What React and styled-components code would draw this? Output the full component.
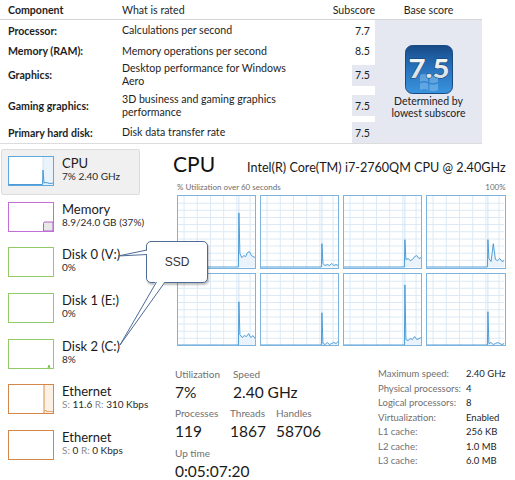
import React from 'react';
import styled, { createGlobalStyle } from 'styled-components';

const GlobalStyle = createGlobalStyle`
  html, body {
    margin: 0;
    padding: 0;
    background: #fff;
  }
  body {
    font-family: Lato, "Liberation Sans", sans-serif;
    color: #1e1e1e;
  }
`;

const Page = styled.div`
  position: relative;
  width: 515px;
  height: 480px;
  overflow: hidden;
  background: #fff;
`;

/* ---------- experience index table ---------- */

const ScoreTable = styled.div`
  display: grid;
  grid-template-columns: 122px 230px 23px 107px;
  grid-template-rows: 20px 21px 20px 28px 33px 21px;
  width: 482px;
  border-bottom: 1px solid #dcdcdc;
  font-size: 10.6px;
`;

const HeadCell = styled.div`
  display: flex;
  align-items: center;
  justify-content: ${p => p.$align || 'flex-start'};
  padding-left: ${p => p.$pad || 0}px;
  font-weight: ${p => (p.$bold ? 700 : 400)};
  white-space: nowrap;
  border-bottom: 1px solid #d4d4d4;
  box-sizing: border-box;
`;

const NameCell = styled.div`
  display: flex;
  align-items: center;
  padding-left: 8px;
  font-weight: 700;
`;

const DescCell = styled.div`
  display: flex;
  align-items: center;
  line-height: 13px;
`;

const SubCell = styled.div`
  display: flex;
  align-items: center;
`;

const SubBox = styled.div`
  width: 100%;
  height: 21px;
  display: flex;
  align-items: center;
  padding-left: 3px;
  box-sizing: border-box;
  background: ${p => (p.$shaded ? '#e6e8f1' : '#fff')};
`;

const BaseCell = styled.div`
  grid-column: 4;
  grid-row: 2 / span 5;
  background: #e6e8f1;
  display: flex;
  flex-direction: column;
  align-items: center;
  justify-content: center;
  gap: 2px;
  padding-top: 1px;
`;

const BaseNote = styled.div`
  text-align: center;
  line-height: 11.5px;
  font-size: 10.5px;
  color: #222;
`;

/* ---------- task manager ---------- */

const Monitor = styled.div`
  display: flex;
  padding-top: 5px;
`;

const Sidebar = styled.div`
  width: 139px;
  padding-left: 1px;
  display: flex;
  flex-direction: column;
`;

const NavItem = styled.div`
  height: 45.67px;
  box-sizing: border-box;
  display: flex;
  align-items: flex-start;
  gap: 8px;
  padding: 6px 0 0 6px;
  background: ${p => (p.$active ? '#f0f0f0' : 'transparent')};
  border: 1px solid ${p => (p.$active ? '#dcdcdc' : 'transparent')};
  border-radius: 2px;
`;

const Thumb = styled.div`
  width: 46px;
  height: 30px;
  box-sizing: border-box;
  border: 1px solid ${p => p.$color};
  background: #fff;
  flex: none;

  svg {
    display: block;
    width: 44px;
    height: 28px;
  }
`;

const NavText = styled.div`
  display: flex;
  flex-direction: column;
  white-space: nowrap;
`;

const NavTitle = styled.div`
  font-size: 13px;
  line-height: 14px;
  color: #1a1a1a;
`;

const NavSub = styled.div`
  font-size: 10px;
  line-height: 12px;
  color: #2a2a2a;
`;

const Dim = styled.span`
  color: #8c8c8c;
`;

const Panel = styled.div`
  flex: 1;
  margin-left: 33px;
  padding-right: 12px;
  display: flex;
  flex-direction: column;
`;

const TitleRow = styled.div`
  display: flex;
  align-items: baseline;
  justify-content: space-between;
  margin-top: 3px;
`;

const Title = styled.div`
  font-size: 21px;
  line-height: 24px;
  color: #111;
`;

const CpuName = styled.div`
  font-size: 12.6px;
  color: #1a1a1a;
`;

const UtilRow = styled.div`
  display: flex;
  justify-content: space-between;
  padding-left: 4px;
  margin-top: 6px;
  font-size: 8px;
  line-height: 10px;
  color: #6e6e6e;
`;

const GraphGrid = styled.div`
  display: grid;
  grid-template-columns: repeat(4, 1fr);
  grid-template-rows: repeat(2, 1fr);
  gap: 4px;
  height: 151px;
  margin-top: 3px;
  padding-left: 4px;
`;

const CellFrame = styled.div`
  border: 1px solid #7db3dc;
  background: #fff;
  overflow: hidden;

  svg {
    display: block;
    width: 100%;
    height: 100%;
  }
`;

const Stats = styled.div`
  display: flex;
  margin-top: 22px;
  padding-left: 2px;
`;

const StatsLeft = styled.div`
  width: 203px;
  flex: none;
  display: flex;
  flex-direction: column;
`;

const StatRow = styled.div`
  display: flex;
  margin-top: ${p => p.$gap || 0}px;
`;

const Stat = styled.div`
  width: ${p => p.$w}px;
  display: flex;
  flex-direction: column;
  gap: 3px;
`;

const StatLabel = styled.div`
  font-size: 10px;
  line-height: 12px;
  color: #707070;
`;

const StatValue = styled.div`
  font-size: 15.5px;
  line-height: 18px;
  color: #1a1a1a;
  white-space: nowrap;
`;

const SpecTable = styled.div`
  display: grid;
  grid-template-columns: 88px auto;
  grid-auto-rows: 14.5px;
  align-items: center;
  margin-top: -1.5px;
  font-size: 9.5px;
  white-space: nowrap;
`;

const SpecLabel = styled.div`
  color: #707070;
`;

const SpecValue = styled.div`
  color: #1e1e1e;
`;

/* ---------- callout ---------- */

const Callout = styled.div`
  position: absolute;
  left: 146px;
  top: 241px;
  width: 62px;
  height: 42px;
  box-sizing: border-box;
  border: 1.5px solid #4d6b95;
  border-radius: 5px;
  background: #fff;
  box-shadow: 1px 2px 2px rgba(0, 0, 0, 0.25);
  display: flex;
  align-items: center;
  justify-content: center;
  font-family: "Liberation Sans", Arial, sans-serif;
  font-size: 12px;
  color: #333;
`;

const Pointers = styled.svg`
  position: absolute;
  left: 0;
  top: 0;
  width: 515px;
  height: 480px;
  pointer-events: none;
`;

/* ---------- drawings ---------- */

const ScoreBadge = () => (
  <svg width="48" height="49" viewBox="0 0 48 49">
    <defs>
      <linearGradient id="badgeBg" x1="0" y1="0" x2="0" y2="1">
        <stop offset="0" stopColor="#174a86" />
        <stop offset="0.45" stopColor="#2670bb" />
        <stop offset="1" stopColor="#3b94de" />
      </linearGradient>
      <linearGradient id="badgeText" x1="0" y1="0" x2="0" y2="1">
        <stop offset="0" stopColor="#ffffff" />
        <stop offset="1" stopColor="#cdd6e0" />
      </linearGradient>
    </defs>
    <rect x="0.5" y="0.5" width="47" height="48" rx="7" fill="url(#badgeBg)" stroke="#1a4b80" />
    <g fill="#8cc4f0" opacity="0.5">
      <path d="M15 30 Q19 28 23 30 L23 37 Q19 35 15 37 Z" />
      <path d="M24.5 30.5 Q29 32 33 30 L33 37 Q29 39 24.5 37.5 Z" />
      <path d="M15 38.5 Q19 36.5 23 38.5 L23 45 Q19 43 15 45 Z" />
      <path d="M24.5 39 Q29 40.5 33 38.5 L33 45 Q29 47 24.5 45.5 Z" />
    </g>
    <text
      x="24"
      y="33"
      textAnchor="middle"
      fontFamily="Lato, sans-serif"
      fontWeight="900"
      fontSize="26"
      textLength="41"
      lengthAdjust="spacingAndGlyphs"
      fill="url(#badgeText)"
      stroke="#15406e"
      strokeWidth="1"
      paintOrder="stroke"
    >
      7.5
    </text>
  </svg>
);

const thumbs = {
  cpu: (
    <svg viewBox="0 0 44 28">
      <rect x="34" y="0" width="10" height="28" fill="#eaf3fb" />
      <line x1="34" y1="0" x2="34" y2="28" stroke="#cfe3f3" />
      <polyline
        points="0,27.5 33.5,27.5 34,13 35,26 37,25.5 39,26 41,26.5 44,26"
        fill="none"
        stroke="#4a9bd5"
        strokeWidth="1"
      />
    </svg>
  ),
  mem: (
    <svg viewBox="0 0 44 28">
      <path d="M34.5 28 L34.5 20.5 Q34.5 19 36 19 L44 19 L44 28 Z" fill="#e8e8e8" stroke="#b45fc9" strokeWidth="1" />
    </svg>
  ),
  empty: <svg viewBox="0 0 44 28" />,
  disk2: (
    <svg viewBox="0 0 44 28">
      <polyline points="39,28 40,25 41,28" fill="#cfe8bd" stroke="#7cbf4f" strokeWidth="1" />
    </svg>
  ),
  eth: (
    <svg viewBox="0 0 44 28">
      <rect x="35" y="0" width="9" height="28" fill="#fdf1e5" />
      <line x1="35" y1="0" x2="35" y2="28" stroke="#d8904f" strokeWidth="1" />
      <polyline points="35,27 37,25 38,27 40,26 41,27 42,26 44,27" fill="none" stroke="#d8904f" strokeWidth="0.8" />
    </svg>
  ),
};

const navItems = [
  { title: 'CPU', sub: '7% 2.40 GHz', color: '#5ea8dd', thumb: 'cpu', active: true },
  { title: 'Memory', sub: '8.9/24.0 GB (37%)', color: '#c16fd6', thumb: 'mem' },
  { title: 'Disk 0 (V:)', sub: '0%', color: '#92c96a', thumb: 'empty' },
  { title: 'Disk 1 (E:)', sub: '0%', color: '#92c96a', thumb: 'empty' },
  { title: 'Disk 2 (C:)', sub: '8%', color: '#92c96a', thumb: 'disk2' },
  { title: 'Ethernet', eth: ['11.6', '310 Kbps'], color: '#d4874a', thumb: 'eth' },
  { title: 'Ethernet', eth: ['0', '0 Kbps'], color: '#d4874a', thumb: 'empty' },
];

const cores = [
  { top: 17, tail: [58, 62, 60, 61, 57, 56, 60, 61, 62] },
  { top: 48, tail: [68, 70, 69, 70, 68, 70, 69, 70] },
  { top: 44, tail: [64, 63, 65, 64, 61, 60, 63, 62] },
  { top: 44, tail: [63, 66, 48, 64, 65, 63, 66, 65] },
  { top: 28, tail: [61, 64, 62, 63, 60, 64, 62, 65] },
  { top: 39, tail: [70, 71, 69, 71, 70, 69, 70, 68] },
  { top: 11, tail: [66, 67, 65, 66, 63, 66, 65, 64] },
  { top: 38, tail: [70, 69, 71, 70, 69, 70, 71, 70] },
];

const CoreGraph = ({ top, tail }) => {
  const W = 76;
  const H = 72;
  const sx = 60;
  const step = (W - sx - 1) / (tail.length - 1);
  const tailPts = tail.map((y, i) => `${(sx + 1 + i * step).toFixed(1)},${y}`);
  const line = [`0,${H - 0.5}`, `${sx - 0.5},${H - 0.5}`, `${sx},${top}`, ...tailPts].join(' ');
  const area = [`${sx},${H}`, `${sx},${top}`, ...tailPts, `${W},${H}`].join(' ');
  const vLines = [6, 19, 32, 45, 58, 71];
  const hLines = [7.2, 14.4, 21.6, 28.8, 36, 43.2, 50.4, 57.6, 64.8];

  return (
    <CellFrame>
      <svg viewBox={`0 0 ${W} ${H}`} preserveAspectRatio="none">
        {vLines.map(x => (
          <line key={`v${x}`} x1={x} y1="0" x2={x} y2={H} stroke="#dbeaf6" strokeWidth="1" />
        ))}
        {hLines.map(y => (
          <line key={`h${y}`} x1="0" y1={y} x2={W} y2={y} stroke="#dbeaf6" strokeWidth="1" />
        ))}
        <polygon points={area} fill="#eaf3fb" />
        <line x1={sx} y1="0" x2={sx} y2={H} stroke="#c4ddf1" strokeWidth="0.8" />
        <polyline points={line} fill="none" stroke="#3f95d3" strokeWidth="0.9" />
      </svg>
    </CellFrame>
  );
};

const ratings = [
  { name: 'Processor:', desc: ['Calculations per second'], score: '7.7' },
  { name: 'Memory (RAM):', desc: ['Memory operations per second'], score: '8.5' },
  { name: 'Graphics:', desc: ['Desktop performance for Windows', 'Aero'], score: '7.5', shaded: true },
  { name: 'Gaming graphics:', desc: ['3D business and gaming graphics', 'performance'], score: '7.5', shaded: true },
  { name: 'Primary hard disk:', desc: ['Disk data transfer rate'], score: '7.5', shaded: true },
];

const specs = [
  ['Maximum speed:', '2.40 GHz'],
  ['Physical processors:', '4'],
  ['Logical processors:', '8'],
  ['Virtualization:', 'Enabled'],
  ['L1 cache:', '256 KB'],
  ['L2 cache:', '1.0 MB'],
  ['L3 cache:', '6.0 MB'],
];

const App = () => {
  return (
    <Page>
      <GlobalStyle />

      <ScoreTable>
        <HeadCell $pad={8} $bold>Component</HeadCell>
        <HeadCell>What is rated</HeadCell>
        <HeadCell $align="flex-end">Subscore</HeadCell>
        <HeadCell $align="center">Base score</HeadCell>

        {ratings.map((r, i) => (
          <React.Fragment key={r.name}>
            <NameCell style={{ gridRow: i + 2 }}>{r.name}</NameCell>
            <DescCell style={{ gridRow: i + 2 }}>
              <div>
                {r.desc.map((d, j) => (
                  <div key={j}>{d}</div>
                ))}
              </div>
            </DescCell>
            <SubCell style={{ gridRow: i + 2 }}>
              <SubBox $shaded={r.shaded}>{r.score}</SubBox>
            </SubCell>
          </React.Fragment>
        ))}

        <BaseCell>
          <ScoreBadge />
          <BaseNote>
            Determined by
            <br />
            lowest subscore
          </BaseNote>
        </BaseCell>
      </ScoreTable>

      <Monitor>
        <Sidebar>
          {navItems.map((n, i) => (
            <NavItem key={i} $active={n.active}>
              <Thumb $color={n.color}>{thumbs[n.thumb]}</Thumb>
              <NavText>
                <NavTitle>{n.title}</NavTitle>
                <NavSub>
                  {n.eth ? (
                    <>
                      <Dim>S:</Dim> {n.eth[0]} <Dim>R:</Dim> {n.eth[1]}
                    </>
                  ) : (
                    n.sub
                  )}
                </NavSub>
              </NavText>
            </NavItem>
          ))}
        </Sidebar>

        <Panel>
          <TitleRow>
            <Title>CPU</Title>
            <CpuName>Intel(R) Core(TM) i7-2760QM CPU @ 2.40GHz</CpuName>
          </TitleRow>
          <UtilRow>
            <span>% Utilization over 60 seconds</span>
            <span>100%</span>
          </UtilRow>
          <GraphGrid>
            {cores.map((c, i) => (
              <CoreGraph key={i} top={c.top} tail={c.tail} />
            ))}
          </GraphGrid>

          <Stats>
            <StatsLeft>
              <StatRow>
                <Stat $w={58}>
                  <StatLabel>Utilization</StatLabel>
                  <StatValue>7%</StatValue>
                </Stat>
                <Stat $w={100}>
                  <StatLabel>Speed</StatLabel>
                  <StatValue>2.40 GHz</StatValue>
                </Stat>
              </StatRow>
              <StatRow $gap={6}>
                <Stat $w={55}>
                  <StatLabel>Processes</StatLabel>
                  <StatValue>119</StatValue>
                </Stat>
                <Stat $w={46}>
                  <StatLabel>Threads</StatLabel>
                  <StatValue>1867</StatValue>
                </Stat>
                <Stat $w={80}>
                  <StatLabel>Handles</StatLabel>
                  <StatValue>58706</StatValue>
                </Stat>
              </StatRow>
              <StatRow $gap={7}>
                <Stat $w={100}>
                  <StatLabel>Up time</StatLabel>
                  <StatValue>0:05:07:20</StatValue>
                </Stat>
              </StatRow>
            </StatsLeft>

            <SpecTable>
              {specs.map(([k, v]) => (
                <React.Fragment key={k}>
                  <SpecLabel>{k}</SpecLabel>
                  <SpecValue>{v}</SpecValue>
                </React.Fragment>
              ))}
            </SpecTable>
          </Stats>
        </Panel>
      </Monitor>

      <Callout>SSD</Callout>
      <Pointers viewBox="0 0 515 480">
        <polygon points="118,256 148,250 148,255" fill="#fff" />
        <polyline points="147,250 118,256 147,254.5" fill="none" stroke="#4d6b95" strokeWidth="1" />
        <polygon points="156,281 166,281 120,345" fill="#fff" />
        <polyline points="156.5,282 120,345 165,282" fill="none" stroke="#4d6b95" strokeWidth="1" />
      </Pointers>
    </Page>
  );
};

export default App;
